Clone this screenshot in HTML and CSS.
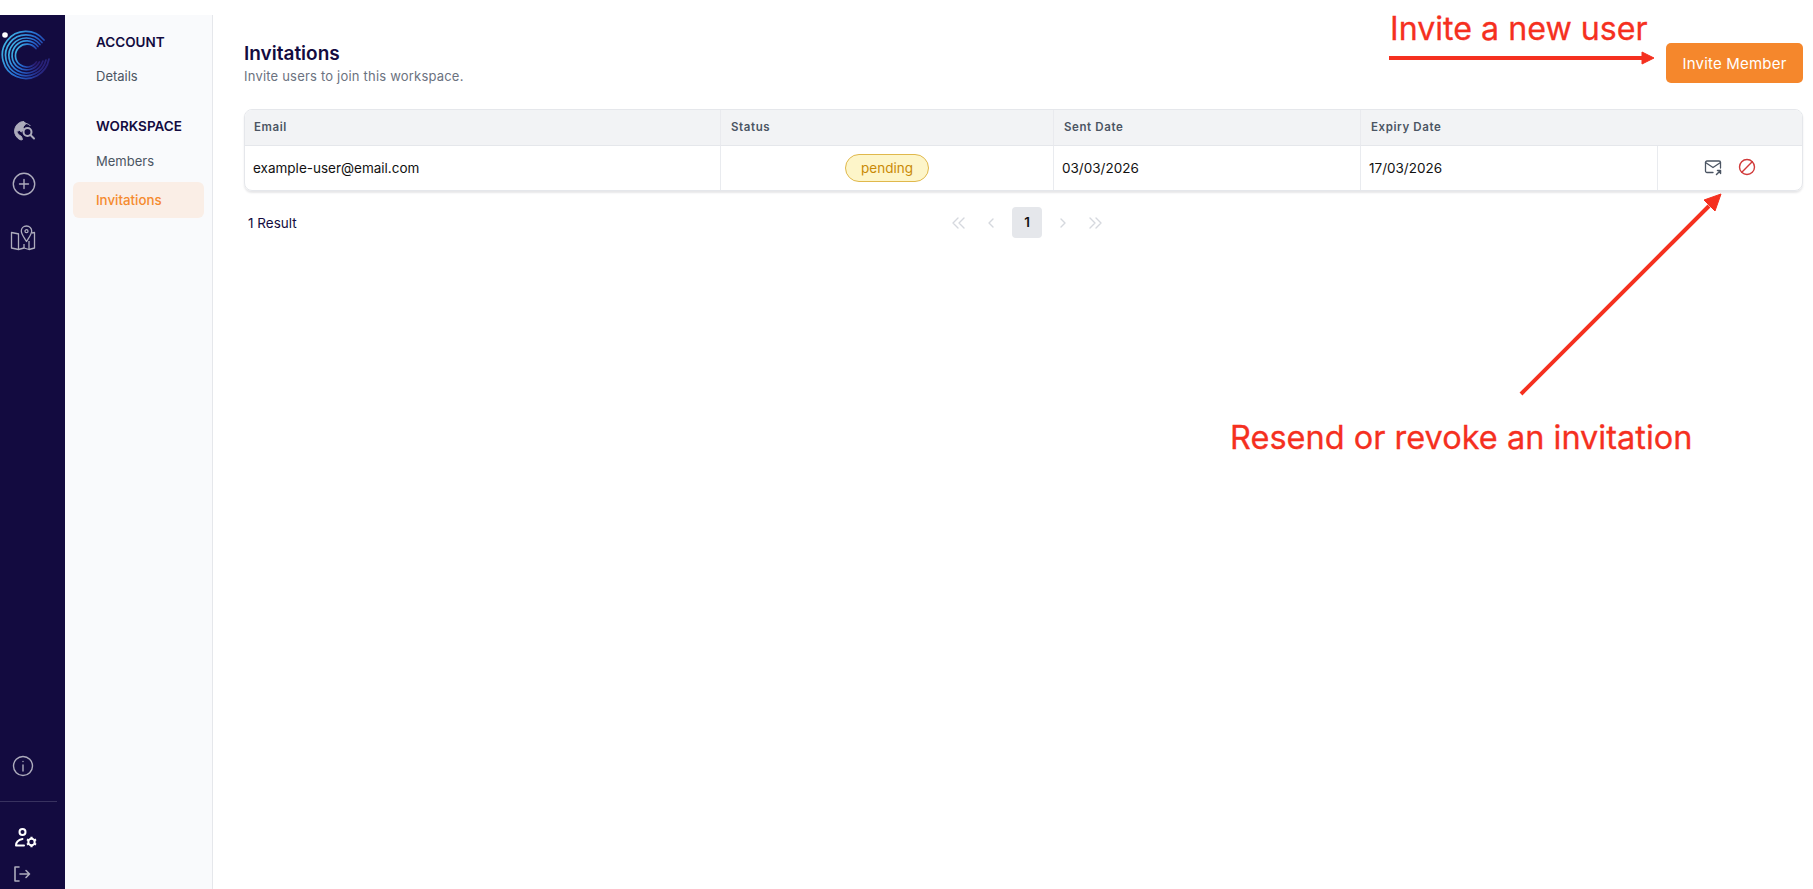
FILE: index.html
```html
<!DOCTYPE html>
<html lang="en">
<head>
<meta charset="utf-8">
<title>Invitations</title>
<link rel="stylesheet" href="styles.css">
</head>
<body>
<div class="app">
  <aside class="rail">
    <svg class="logo" width="54" height="54" viewBox="0 0 54 54" fill="none">
      <defs>
        <linearGradient id="lg" x1="0" y1="0.3" x2="1" y2="0.8">
          <stop offset="0" stop-color="#3fb4e6"/>
          <stop offset="0.5" stop-color="#2468cf"/>
          <stop offset="0.8" stop-color="#243a9c"/>
          <stop offset="1" stop-color="#2a1668"/>
        </linearGradient>
      </defs>
      <circle cx="5" cy="6" r="2.8" fill="#fff"/>
      <g stroke="url(#lg)" stroke-width="1.7" stroke-linecap="round">
        <path d="M44 11A23.5 23.5 0 1 0 49 30"/>
        <path d="M42 13.500A20.500 20.500 0 1 0 46 31"/>
        <path d="M40 15.500A17.500 17.500 0 1 0 43 32"/>
        <path d="M38 17.500A14.500 14.500 0 1 0 39.500 33"/>
        <path d="M36 19.500A11.500 11.500 0 1 0 36.500 33"/>
      </g>
    </svg>
    <nav class="rail-top">
      <svg class="ico" width="26" height="26" viewBox="0 0 26 26" fill="none" stroke="#adacbc" stroke-width="2">
        <path d="M13 4.500a9.500 9.500 0 0 0-3 18.500l1.500-.5-1-3-3-2-2-3 3-1 2 1.500 2-3-.5-2 3-3.500c2 .4 3.500 1.300 4.500 2.500" fill="#adacbc" stroke-width="1"/>
        <circle cx="16.500" cy="15" r="4"/>
        <path d="M19.500 18l3.500 3.500" stroke-linecap="round"/>
      </svg>
      <svg class="ico" width="26" height="26" viewBox="0 0 26 26" fill="none" stroke="#adacbc" stroke-width="1.400" stroke-linecap="round">
        <circle cx="13" cy="13" r="10.700"/>
        <path d="M13 8.500v9M8.500 13h9"/>
      </svg>
      <svg class="ico map" width="26" height="26" viewBox="0 0 26 26" fill="none" stroke="#adacbc" stroke-width="1.300" stroke-linejoin="round">
        <path d="M9 9L1.500 7.500v15.500L8.500 24.500l5.500-1.500 5 1.500 5.500-1.500V7.500L22 8"/>
        <path d="M8.500 9v15.500M19 16v8.500M14 19v4"/>
        <path d="M16.500 1c-3 0-5.200 2.200-5.200 5 0 3.200 3 6.700 5.200 10.500 2.200-3.800 5.200-7.300 5.200-10.500 0-2.800-2.200-5-5.200-5z"/>
        <circle cx="16.500" cy="6.200" r="1.500"/>
      </svg>
    </nav>
    <div class="rail-bottom">
      <svg class="ico info" width="24" height="24" viewBox="0 0 24 24" fill="none" stroke="#adacbc" stroke-width="1.400" stroke-linecap="round">
        <circle cx="12" cy="12" r="9.500"/>
        <path d="M12 11v6M12 7.500v.1"/>
      </svg>
      <div class="rail-rule"></div>
      <svg class="ico cog" width="24" height="22" viewBox="0 0 24 22" fill="none" stroke="#fff" stroke-width="2" stroke-linecap="round" stroke-linejoin="round">
        <circle cx="8.500" cy="5" r="3"/>
        <path d="M2 18.500c0-3.500 2-5.500 6.500-6.500M2 18.500h8"/>
        <path d="M17.500 9.800v10.400M13 12.400l9 5.200M13 17.600l9-5.200" stroke-width="2.200" stroke-linecap="butt"/>
        <circle cx="17.500" cy="15" r="3.200" fill="#130b40" stroke-width="2"/>
      </svg>
      <svg class="ico out" width="18" height="18" viewBox="0 0 18 18" fill="none" stroke="#adacbc" stroke-width="1.600" stroke-linecap="round" stroke-linejoin="round">
        <path d="M6 2H2v14h4M7 9h9.500M13 5.500L16.500 9 13 12.500"/>
      </svg>
    </div>
  </aside>

  <aside class="subnav">
    <h2 class="subnav-head">ACCOUNT</h2>
    <a class="subnav-link first">Details</a>
    <h2 class="subnav-head second">WORKSPACE</h2>
    <a class="subnav-link">Members</a>
    <a class="subnav-link active">Invitations</a>
  </aside>

  <main class="main">
    <header class="page-head">
      <div>
        <h1 class="title">Invitations</h1>
        <p class="subtitle">Invite users to join this workspace.</p>
      </div>
      <button class="invite-btn">Invite Member</button>
    </header>

    <section class="table">
      <div class="cell th">Email</div>
      <div class="cell th">Status</div>
      <div class="cell th">Sent Date</div>
      <div class="cell th">Expiry Date</div>
      <div class="cell th"></div>
      <div class="cell td">example-user@email.com</div>
      <div class="cell td center"><span class="badge">pending</span></div>
      <div class="cell td">03/03/2026</div>
      <div class="cell td">17/03/2026</div>
      <div class="cell td actions">
        <svg width="18" height="18" viewBox="0 0 18 18" fill="none" stroke="#4b5563" stroke-width="1.300" stroke-linecap="round" stroke-linejoin="round">
          <path d="M9 14.500H3a1.500 1.500 0 0 1-1.500-1.500V4.500A1.500 1.500 0 0 1 3 3h12a1.500 1.500 0 0 1 1.500 1.500V10"/>
          <path d="M1.500 4.500L9 9.500l7.500-5"/>
          <path d="M12.500 16.500l4-4M13.500 12.500h3v3" stroke-width="1.500"/>
        </svg>
        <svg width="18" height="18" viewBox="0 0 18 18" fill="none" stroke="#d13a3a" stroke-width="1.400" stroke-linecap="round">
          <circle cx="9" cy="9" r="7.500"/>
          <path d="M3.800 14.200L14.200 3.800"/>
        </svg>
      </div>
    </section>

    <footer class="pager-row">
      <span class="result">1 Result</span>
      <div class="pager">
        <svg class="pg wide" width="16" height="12" viewBox="0 0 16 12"><path d="M7 1L2 6l5 5M13 1L8 6l5 5"/></svg>
        <svg class="pg" width="8" height="12" viewBox="0 0 8 12"><path d="M6 2L2 6l4 4"/></svg>
        <span class="page-num">1</span>
        <svg class="pg" width="8" height="12" viewBox="0 0 8 12"><path d="M2 2l4 4-4 4"/></svg>
        <svg class="pg wide" width="16" height="12" viewBox="0 0 16 12"><path d="M3 1l5 5-5 5M9 1l5 5-5 5"/></svg>
      </div>
    </footer>
  </main>
</div>

<div class="note note-invite">Invite a new user</div>
<div class="note note-resend">Resend or revoke an invitation</div>
<svg class="arrows" width="1813" height="889" viewBox="0 0 1813 889" fill="#f5301f" stroke="none">
  <path d="M1389 56h260v4h-260z"/>
  <path d="M1642 52l12 6-12 6z" stroke="#f5301f"/>
  <path d="M1521 394l188-188" stroke="#f5301f" stroke-width="4" fill="none"/>
  <path d="M1721 194l-6 17-11-11z" stroke="#f5301f"/>
</svg>
</body>
</html>
```
FILE: styles.css
```css
* { box-sizing: border-box; }
html, body { margin: 0; height: 100%; background: #fff; }
body {
  font-family: Inter, "Liberation Sans", sans-serif;
  overflow: hidden;
  padding-top: 15px;
  color: #120c40;
}
.app { display: flex; height: 874px; }

.rail {
  width: 65px;
  flex: none;
  background: #130b40;
  display: flex;
  flex-direction: column;
  position: relative;
}
.logo { display: block; margin-top: 14px; flex: none; }
.rail-top {
  display: flex;
  flex-direction: column;
  align-items: center;
  gap: 28px;
  padding: 34px 2px 0 0;
  width: 50px;
}
.ico { display: block; flex: none; }
.map { margin-left: -3px; }
.rail-bottom {
  margin-top: auto;
  display: flex;
  flex-direction: column;
  padding-bottom: 6px;
}
.info { margin: 0 0 23px 11px; }
.rail-rule { width: 57px; height: 1px; background: #38325f; margin-bottom: 25px; }
.cog { margin: 0 0 16px 14px; }
.out { margin-left: 13px; }

.subnav {
  width: 148px;
  flex: none;
  background: #f9fafc;
  border-right: 1px solid #e5e7eb;
  padding: 19px 8px 0;
  display: flex;
  flex-direction: column;
}
.subnav-head {
  margin: 0 0 10px;
  padding-left: 23px;
  font-size: 13.500px;
  line-height: 16px;
  font-weight: 600;
  color: #130b40;
}
.subnav-head.second { margin: 26px 0 9px; }
.subnav-link {
  display: block;
  height: 36px;
  line-height: 36px;
  padding-left: 23px;
  border-radius: 6px;
  font-size: 13px;
  color: #4b5563;
  margin: 0 0 3px;
  width: 131px;
}
.subnav-link.first { height: 32px; line-height: 32px; margin: 0; }
.subnav-link.active {
  background: #faeee6;
  color: #f58a2e;
  font-weight: 500;
  font-size: 13.300px;
}

.main { flex: 1; min-width: 0; padding: 28px 10px 0 31px; }
.page-head {
  display: flex;
  justify-content: space-between;
  align-items: flex-start;
  height: 66px;
}
.title {
  margin: 0;
  font-size: 19px;
  line-height: 22px;
  font-weight: 600;
  color: #130b40;
}
.subtitle {
  margin: 3px 0 0;
  font-size: 13px;
  line-height: 16px;
  color: #6b7280;
  letter-spacing: .2px;
}
.invite-btn {
  width: 137px;
  height: 40px;
  border: 0;
  border-radius: 5px;
  background: #f5872c;
  color: #fff;
  font: 400 15px Inter, "Liberation Sans", sans-serif;
  letter-spacing: .2px;
  padding: 0;
}

.table {
  display: grid;
  grid-template-columns: 475px 333px 307px 297px 1fr;
  grid-template-rows: 36px 44px;
  border: 1px solid #e5e7eb;
  border-radius: 8px;
  box-shadow: 0 2px 2px rgba(17, 24, 39, .1);
  overflow: hidden;
}
.cell { display: flex; align-items: center; border-left: 1px solid #e9ebef; }
.cell:nth-child(5n+1) { border-left: 0; }
.th {
  background: #f2f3f5;
  border-left-color: #e9eaee;
  border-bottom: 1px solid #e5e7eb;
  padding: 0 0 2px 10px;
  font-size: 11.500px;
  font-weight: 600;
  color: #4b5563;
  letter-spacing: .6px;
}
.th:nth-child(1) { padding-left: 9px; }
.th:nth-child(5) { border-left: 0; }
.td { padding-left: 8px; font-size: 13.500px; color: #111; }
.center { justify-content: center; padding-left: 0; }
.badge {
  height: 28px;
  line-height: 26px;
  padding: 0 15px;
  border: 1px solid #e0b84c;
  border-radius: 14px;
  background: #fdf5c9;
  color: #c98a06;
  font-size: 13.500px;
}
.actions { justify-content: flex-start; gap: 16px; padding: 0 0 3px 46px; }

.pager-row {
  position: relative;
  display: flex;
  align-items: center;
  justify-content: center;
  height: 31px;
  margin-top: 16px;
}
.result { position: absolute; left: 4px; font-size: 13.500px; color: #130b40; }
.pager { display: flex; align-items: center; margin-left: 7px; }
.page-num {
  width: 30px;
  height: 31px;
  line-height: 31px;
  text-align: center;
  border-radius: 4px;
  background: #e5e7eb;
  font-size: 13.500px;
  font-weight: 600;
  color: #111;
  margin: 0 17px;
}
.pg { fill: none; stroke: #d5d8de; stroke-width: 1.400; stroke-linecap: round; stroke-linejoin: round; }
.pg:first-child { margin-right: 20px; }
.pg:last-child { margin-left: 20px; }

.note {
  position: absolute;
  color: #f5301f;
  line-height: 38px;
  font-weight: 400;
  white-space: nowrap;
  -webkit-text-stroke: .3px #f5301f;
}
.note-invite { left: 1390px; top: 10px; font-size: 32.200px; }
.note-resend { left: 1230px; top: 419px; font-size: 32.500px; }
.arrows { position: absolute; left: 0; top: 0; pointer-events: none; }
```
